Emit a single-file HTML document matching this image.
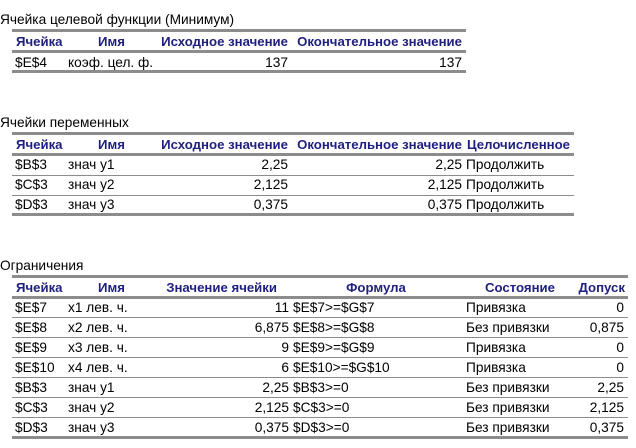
<!DOCTYPE html>
<html><head><meta charset="utf-8"><style>
body{margin:0;width:636px;height:448px;background:#fff;position:relative;overflow:hidden;font-family:"Liberation Sans","DejaVu Sans",sans-serif;font-size:13.7px;color:#000}
.t{position:absolute;white-space:nowrap;line-height:16px}
.h{font-weight:bold;color:#1f1f80;font-size:13.2px}
.r{text-align:right}
.c{text-align:center}
.L{position:absolute;height:1px;background:#8c8c8c}
.T{position:absolute;height:3px;background:#8c8c8c}
</style></head><body>
<!-- Table 1 -->
<div class="t" style="left:0;top:12px">Ячейка целевой функции (Минимум)</div>
<div class="T" style="left:12px;top:29px;width:454px"></div>
<div class="t h" style="left:16px;top:34px">Ячейка</div>
<div class="t h c" style="left:65px;width:93px;top:34px">Имя</div>
<div class="t h r" style="left:150px;width:138px;top:34px">Исходное значение</div>
<div class="t h r" style="left:290px;width:172px;top:34px">Окончательное значение</div>
<div class="T" style="left:12px;top:50px;width:454px"></div>
<div class="t" style="left:15px;top:55px">$E$4</div>
<div class="t" style="left:68px;top:55px">коэф. цел. ф.</div>
<div class="t r" style="left:150px;width:138px;top:55px">137</div>
<div class="t r" style="left:290px;width:172px;top:55px">137</div>
<div class="T" style="left:12px;top:70px;width:454px"></div>

<!-- Table 2 -->
<div class="t" style="left:0;top:115px">Ячейки переменных</div>
<div class="T" style="left:12px;top:132px;width:562px"></div>
<div class="t h" style="left:16px;top:137px">Ячейка</div>
<div class="t h c" style="left:65px;width:93px;top:137px">Имя</div>
<div class="t h r" style="left:150px;width:138px;top:137px">Исходное значение</div>
<div class="t h r" style="left:290px;width:172px;top:137px">Окончательное значение</div>
<div class="t h" style="left:467px;top:137px">Целочисленное</div>
<div class="T" style="left:12px;top:153px;width:562px"></div>
<div class="t" style="left:15px;top:157px">$B$3</div><div class="t" style="left:68px;top:157px">знач y1</div><div class="t r" style="left:150px;width:138px;top:157px">2,25</div><div class="t r" style="left:290px;width:172px;top:157px">2,25</div><div class="t" style="left:466px;top:157px">Продолжить</div>
<div class="L" style="left:12px;top:175px;width:562px"></div>
<div class="t" style="left:15px;top:177px">$C$3</div><div class="t" style="left:68px;top:177px">знач y2</div><div class="t r" style="left:150px;width:138px;top:177px">2,125</div><div class="t r" style="left:290px;width:172px;top:177px">2,125</div><div class="t" style="left:466px;top:177px">Продолжить</div>
<div class="L" style="left:12px;top:195px;width:562px"></div>
<div class="t" style="left:15px;top:197px">$D$3</div><div class="t" style="left:68px;top:197px">знач y3</div><div class="t r" style="left:150px;width:138px;top:197px">0,375</div><div class="t r" style="left:290px;width:172px;top:197px">0,375</div><div class="t" style="left:466px;top:197px">Продолжить</div>
<div class="T" style="left:12px;top:213px;width:562px"></div>

<!-- Table 3 -->
<div class="t" style="left:0;top:258px">Ограничения</div>
<div class="T" style="left:12px;top:275px;width:616px"></div>
<div class="t h" style="left:16px;top:280px">Ячейка</div>
<div class="t h c" style="left:65px;width:93px;top:280px">Имя</div>
<div class="t h r" style="left:150px;width:127px;top:280px">Значение ячейки</div>
<div class="t h c" style="left:290px;width:172px;top:280px">Формула</div>
<div class="t h c" style="left:462px;width:116px;top:280px">Состояние</div>
<div class="t h r" style="left:570px;width:55px;top:280px">Допуск</div>
<div class="T" style="left:12px;top:296px;width:616px"></div>

<div class="t" style="left:15px;top:300px">$E$7</div><div class="t" style="left:68px;top:300px">x1 лев. ч.</div><div class="t r" style="left:150px;width:139px;top:300px">11</div><div class="t" style="left:293px;top:300px">$E$7&gt;=$G$7</div><div class="t" style="left:466px;top:300px">Привязка</div><div class="t r" style="left:570px;width:54px;top:300px">0</div>
<div class="L" style="left:12px;top:317px;width:616px"></div>
<div class="t" style="left:15px;top:320px">$E$8</div><div class="t" style="left:68px;top:320px">x2 лев. ч.</div><div class="t r" style="left:150px;width:139px;top:320px">6,875</div><div class="t" style="left:293px;top:320px">$E$8&gt;=$G$8</div><div class="t" style="left:466px;top:320px">Без привязки</div><div class="t r" style="left:570px;width:54px;top:320px">0,875</div>
<div class="L" style="left:12px;top:337px;width:616px"></div>
<div class="t" style="left:15px;top:340px">$E$9</div><div class="t" style="left:68px;top:340px">x3 лев. ч.</div><div class="t r" style="left:150px;width:139px;top:340px">9</div><div class="t" style="left:293px;top:340px">$E$9&gt;=$G$9</div><div class="t" style="left:466px;top:340px">Привязка</div><div class="t r" style="left:570px;width:54px;top:340px">0</div>
<div class="L" style="left:12px;top:357px;width:616px"></div>
<div class="t" style="left:15px;top:360px">$E$10</div><div class="t" style="left:68px;top:360px">x4 лев. ч.</div><div class="t r" style="left:150px;width:139px;top:360px">6</div><div class="t" style="left:293px;top:360px">$E$10&gt;=$G$10</div><div class="t" style="left:466px;top:360px">Привязка</div><div class="t r" style="left:570px;width:54px;top:360px">0</div>
<div class="L" style="left:12px;top:377px;width:616px"></div>
<div class="t" style="left:15px;top:380px">$B$3</div><div class="t" style="left:68px;top:380px">знач y1</div><div class="t r" style="left:150px;width:139px;top:380px">2,25</div><div class="t" style="left:293px;top:380px">$B$3&gt;=0</div><div class="t" style="left:466px;top:380px">Без привязки</div><div class="t r" style="left:570px;width:54px;top:380px">2,25</div>
<div class="L" style="left:12px;top:397px;width:616px"></div>
<div class="t" style="left:15px;top:400px">$C$3</div><div class="t" style="left:68px;top:400px">знач y2</div><div class="t r" style="left:150px;width:139px;top:400px">2,125</div><div class="t" style="left:293px;top:400px">$C$3&gt;=0</div><div class="t" style="left:466px;top:400px">Без привязки</div><div class="t r" style="left:570px;width:54px;top:400px">2,125</div>
<div class="L" style="left:12px;top:417px;width:616px"></div>
<div class="t" style="left:15px;top:420px">$D$3</div><div class="t" style="left:68px;top:420px">знач y3</div><div class="t r" style="left:150px;width:139px;top:420px">0,375</div><div class="t" style="left:293px;top:420px">$D$3&gt;=0</div><div class="t" style="left:466px;top:420px">Без привязки</div><div class="t r" style="left:570px;width:54px;top:420px">0,375</div>
<div class="T" style="left:12px;top:436px;width:616px"></div>
</body></html>
